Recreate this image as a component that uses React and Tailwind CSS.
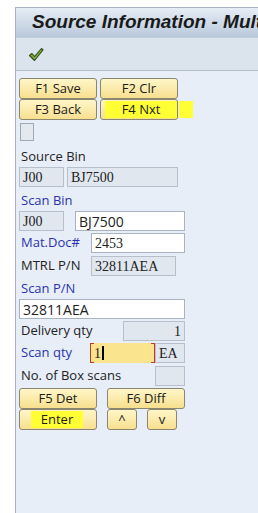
import React from "react";

const FONT = { fontFamily: "'Open Sans', 'DejaVu Sans', sans-serif" };

function SapButton({ label, width = "w-[78px]", highlight }) {
  return (
    <div
      className={`${width} h-[21px] flex items-center justify-center rounded-[3px] border border-[#8a8670] bg-gradient-to-b from-[#fff6c8] to-[#f7df8e] text-[13px] text-[#1a1a1a]`}
    >
      {highlight ? (
        <span className={`${highlight} h-[17px] flex items-center justify-center bg-[#ffff33]`}>
          {label}
        </span>
      ) : (
        label
      )}
    </div>
  );
}

function Field({ value, width, tone = "grey", align = "left", serif = false }) {
  const bg =
    tone === "grey"
      ? "bg-[#e1e7ef] border-[#b6bfcb]"
      : "bg-white border-[#a9b3c1]";
  return (
    <div
      className={`${width} h-[20px] border ${bg} flex items-center px-[3px] text-[14px] text-[#222] ${
        align === "right" ? "justify-end" : ""
      } ${serif ? "font-['Liberation_Serif',serif]" : ""}`}
    >
      {value}
    </div>
  );
}

export default function App() {
  return (
    <div className="w-[258px] h-[513px] bg-white pt-[7px] pl-[15px] overflow-hidden" style={FONT}>
      <div className="h-full border-l border-t border-[#a8b4c2] bg-[#e8eef8] flex flex-col">
        <div className="h-[30px] flex items-center pl-[16px] bg-gradient-to-b from-[#e6edf5] to-[#b9c9dc] border-b border-[#c3ceda] overflow-hidden">
          <span className="whitespace-nowrap italic font-bold text-[19px] text-[#1a1a1a] font-['Liberation_Sans',sans-serif]">
            Source Information - Multi
          </span>
        </div>
        <div className="h-[33px] flex items-center pl-[12px] bg-[#dbe3ec] border-b border-[#b3bfcd]">
          <svg width="16" height="15" viewBox="0 0 16 15">
            <path
              d="M1.5 8.5 L4 6.5 L6.5 9.5 L13.5 1.5 L15 3 L6.5 13.5 Z"
              fill="#7fb13a"
              stroke="#2f4a12"
              strokeWidth="1.1"
              strokeLinejoin="round"
            />
          </svg>
        </div>

        <div className="pl-[3px] pt-[7px] flex flex-col text-[13px] text-[#222]">
          <div className="flex gap-[3px]">
            <SapButton label="F1 Save" />
            <SapButton label="F2 Clr" />
          </div>
          <div className="flex gap-[3px] relative">
            <SapButton label="F3 Back" />
            <SapButton label="F4 Nxt" highlight="w-[72px] ml-[4px]" />
            <div className="absolute left-[160px] top-[2px] w-[14px] h-[17px] bg-[#ffff33]" />
          </div>
          <div className="mt-[3px] ml-[1px] w-[14px] h-[18px] border border-[#9fa9b6] bg-[#e4e9f0]" />

          <div className="mt-[5px] ml-[2px] h-[20px] leading-[20px]">Source Bin</div>
          <div className="mt-[1px] flex gap-[3px]">
            <Field value="J00" width="w-[45px]" serif />
            <Field value="BJ7500" width="w-[111px]" serif />
          </div>

          <div className="mt-[3px] ml-[2px] h-[20px] leading-[20px] text-[#2a33b0]">Scan Bin</div>
          <div className="mt-[1px] flex gap-[11px]">
            <Field value="J00" width="w-[45px]" serif />
            <Field value="BJ7500" width="w-[110px]" tone="white" />
          </div>

          <div className="mt-[2px] flex items-center">
            <div className="w-[72px] pl-[2px] text-[#2a33b0]">Mat.Doc#</div>
            <Field value="2453" width="w-[94px]" tone="white" serif />
          </div>
          <div className="mt-[3px] flex items-center">
            <div className="w-[72px] pl-[2px]">MTRL P/N</div>
            <Field value="32811AEA" width="w-[85px]" serif />
          </div>

          <div className="mt-[2px] ml-[2px] h-[20px] leading-[20px] text-[#2a33b0]">Scan P/N</div>
          <div className="mt-[1px]">
            <Field value="32811AEA" width="w-[166px]" tone="white" />
          </div>

          <div className="mt-[2px] flex items-center">
            <div className="w-[104px] pl-[2px]">Delivery qty</div>
            <Field value="1" width="w-[62px]" align="right" serif />
          </div>
          <div className="mt-[2px] flex items-center">
            <div className="w-[71px] pl-[2px] text-[#2a33b0]">Scan qty</div>
            <div className="relative w-[65px] h-[20px] bg-[#fbe48e] flex items-center px-[4px] text-[14px] font-['Liberation_Serif',serif]">
              1<span className="ml-[1px] w-[2px] h-[14px] bg-black" />
              <div className="absolute left-0 top-0 w-[4px] h-[20px] border-l border-t border-b border-[#c0392b]" />
              <div className="absolute right-0 top-0 w-[4px] h-[20px] border-r border-t border-b border-[#c0392b]" />
            </div>
            <Field value="EA" width="w-[30px]" serif />
          </div>
          <div className="mt-[3px] flex items-center">
            <div className="w-[136px] pl-[2px]">No. of Box scans</div>
            <Field value="" width="w-[30px]" />
          </div>

          <div className="mt-[2px] flex gap-[10px]">
            <SapButton label="F5 Det" />
            <SapButton label="F6 Diff" />
          </div>
          <div className="flex gap-[10px]">
            <SapButton label="Enter" highlight="w-[52px] -ml-[2px]" />
            <SapButton label="^" width="w-[30px]" />
            <SapButton label="v" width="w-[30px]" />
          </div>
        </div>
      </div>
    </div>
  );
}
